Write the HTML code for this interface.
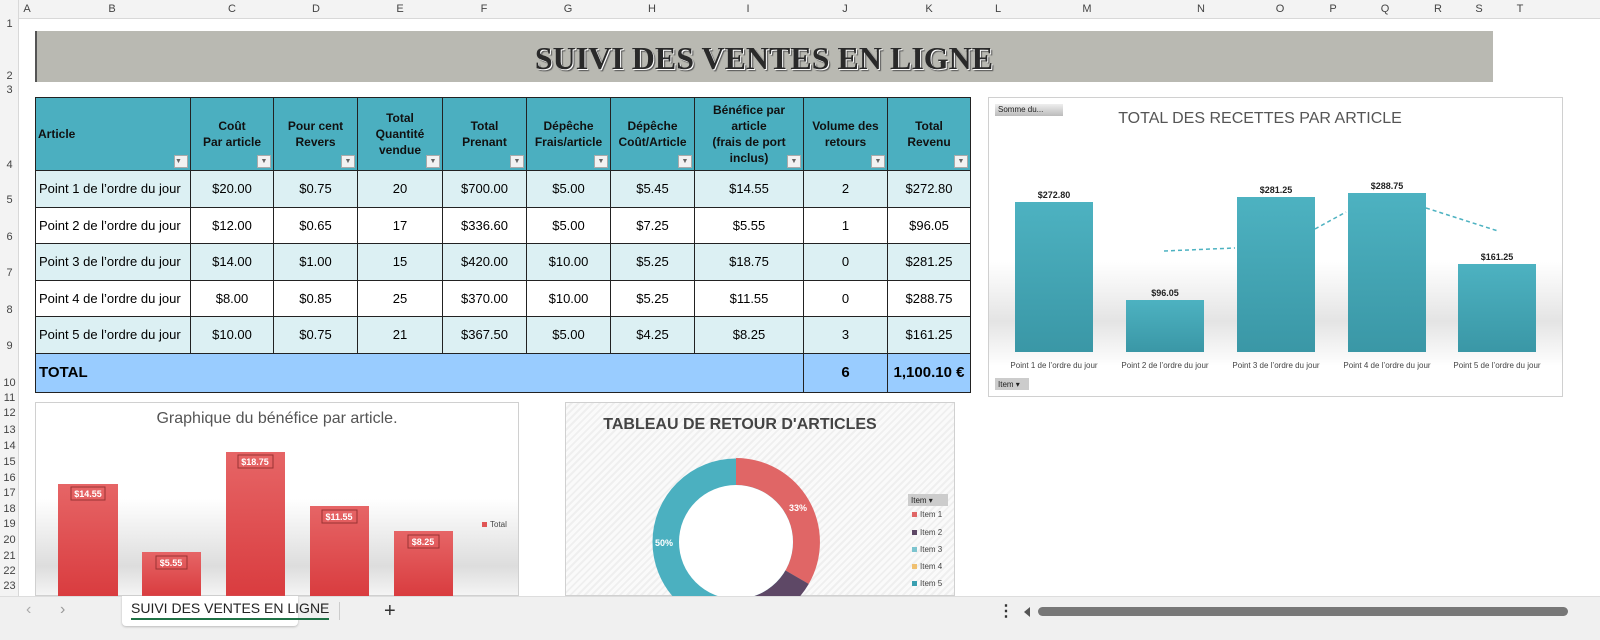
<!DOCTYPE html>
<html><head><meta charset="utf-8"><style>
*{margin:0;padding:0;box-sizing:border-box}
body{width:1600px;height:640px;overflow:hidden;background:#fff;font-family:"Liberation Sans",sans-serif;position:relative}
.a{position:absolute}
.ch{position:absolute;top:0;height:19px;font-size:11px;color:#444;line-height:19px;text-align:center;transform:translateX(-50%)}
.rn{position:absolute;left:0;width:19px;font-size:11px;color:#444;text-align:center}
table{border-collapse:collapse;position:absolute;left:35px;top:97px;table-layout:fixed;font-size:13px}
td{border:1px solid #222;text-align:center;position:relative}
thead td{background:#4bafc0;font-weight:bold;font-size:12px;color:#111;height:73px;line-height:16px;vertical-align:middle}
.dd{position:absolute;right:2px;bottom:2px;width:14px;height:13px;background:#f2f2f2;border:1px solid #aaa;font-size:7px;line-height:12px;color:#666}
tbody tr{height:36.5px}
tr.l td{background:#dcf0f3}
tr.t td{background:#99ccff;font-weight:bold;font-size:15px;height:39px}
</style></head><body>
<div class="a" style="left:0;top:0;width:1600px;height:19px;background:#f3f3f3;border-bottom:1px solid #d8d8d8"></div>
<div class="a" style="left:0;top:0;width:19px;height:596px;background:#f3f3f3;border-right:1px solid #d8d8d8"></div>
<div class="ch" style="left:27px">A</div><div class="ch" style="left:112px">B</div><div class="ch" style="left:232px">C</div><div class="ch" style="left:316px">D</div><div class="ch" style="left:400px">E</div><div class="ch" style="left:484px">F</div><div class="ch" style="left:568px">G</div><div class="ch" style="left:652px">H</div><div class="ch" style="left:748px">I</div><div class="ch" style="left:845px">J</div><div class="ch" style="left:929px">K</div><div class="ch" style="left:998px">L</div><div class="ch" style="left:1087px">M</div><div class="ch" style="left:1201px">N</div><div class="ch" style="left:1280px">O</div><div class="ch" style="left:1333px">P</div><div class="ch" style="left:1385px">Q</div><div class="ch" style="left:1438px">R</div><div class="ch" style="left:1479px">S</div><div class="ch" style="left:1520px">T</div>
<div class="rn" style="top:18px">1</div><div class="rn" style="top:70px">2</div><div class="rn" style="top:84px">3</div><div class="rn" style="top:159px">4</div><div class="rn" style="top:194px">5</div><div class="rn" style="top:231px">6</div><div class="rn" style="top:267px">7</div><div class="rn" style="top:304px">8</div><div class="rn" style="top:340px">9</div><div class="rn" style="top:377px">10</div>
<div class="rn" style="top:392px">11</div><div class="rn" style="top:407px">12</div><div class="rn" style="top:424px">13</div><div class="rn" style="top:440px">14</div><div class="rn" style="top:456px">15</div><div class="rn" style="top:472px">16</div><div class="rn" style="top:487px">17</div><div class="rn" style="top:503px">18</div><div class="rn" style="top:518px">19</div><div class="rn" style="top:534px">20</div><div class="rn" style="top:550px">21</div><div class="rn" style="top:565px">22</div><div class="rn" style="top:580px">23</div>

<div class="a" style="left:35px;top:31px;width:1458px;height:51px;background:#b9b9b2;border-left:2px solid #555"></div>
<div class="a" style="left:35px;top:31px;width:1458px;height:51px;text-align:center;font-family:'Liberation Serif',serif;font-weight:bold;font-size:32px;line-height:54px;color:#2a2a2a;text-shadow:1px 1px 0 #fff,2px 2px 1px #555">SUIVI DES VENTES EN LIGNE</div>

<table>
<colgroup><col style="width:155px"><col style="width:83px"><col style="width:84px"><col style="width:85px"><col style="width:84px"><col style="width:84px"><col style="width:84px"><col style="width:109px"><col style="width:84px"><col style="width:83px"></colgroup>
<thead><tr><td style="text-align:left;padding-left:2px">Article<span class="dd">▼</span></td><td>Coût<br>Par article<span class="dd">▼</span></td><td>Pour cent<br>Revers<span class="dd">▼</span></td><td>Total<br>Quantité<br>vendue<span class="dd">▼</span></td><td>Total<br>Prenant<span class="dd">▼</span></td><td>Dépêche<br>Frais/article<span class="dd">▼</span></td><td>Dépêche<br>Coût/Article<span class="dd">▼</span></td><td>Bénéfice par<br>article<br>(frais de port<br>inclus)<span class="dd">▼</span></td><td>Volume des<br>retours<span class="dd">▼</span></td><td>Total<br>Revenu<span class="dd">▼</span></td></tr></thead>
<tbody>
<tr class="l"><td style="text-align:left;padding-left:3px">Point 1 de l’ordre du jour</td><td>$20.00</td><td>$0.75</td><td>20</td><td>$700.00</td><td>$5.00</td><td>$5.45</td><td>$14.55</td><td>2</td><td>$272.80</td></tr>
<tr><td style="text-align:left;padding-left:3px">Point 2 de l’ordre du jour</td><td>$12.00</td><td>$0.65</td><td>17</td><td>$336.60</td><td>$5.00</td><td>$7.25</td><td>$5.55</td><td>1</td><td>$96.05</td></tr>
<tr class="l"><td style="text-align:left;padding-left:3px">Point 3 de l’ordre du jour</td><td>$14.00</td><td>$1.00</td><td>15</td><td>$420.00</td><td>$10.00</td><td>$5.25</td><td>$18.75</td><td>0</td><td>$281.25</td></tr>
<tr><td style="text-align:left;padding-left:3px">Point 4 de l’ordre du jour</td><td>$8.00</td><td>$0.85</td><td>25</td><td>$370.00</td><td>$10.00</td><td>$5.25</td><td>$11.55</td><td>0</td><td>$288.75</td></tr>
<tr class="l"><td style="text-align:left;padding-left:3px">Point 5 de l’ordre du jour</td><td>$10.00</td><td>$0.75</td><td>21</td><td>$367.50</td><td>$5.00</td><td>$4.25</td><td>$8.25</td><td>3</td><td>$161.25</td></tr>
<tr class="t"><td colspan="8" style="text-align:left;padding-left:3px">TOTAL</td><td>6</td><td>1,100.10 €</td></tr>
</tbody></table>

<div class="a" style="left:988px;top:97px;width:575px;height:300px;border:1px solid #d0d0d0;background:linear-gradient(#fff 0%,#fff 55%,#e4e4e4 75%,#fff 90%)"></div>
<div class="a" style="left:995px;top:104px;width:68px;height:12px;background:linear-gradient(#eee,#bbb);font-size:8px;line-height:12px;padding-left:3px;color:#222">Somme du...</div>
<div class="a" style="left:1060px;top:110px;width:400px;text-align:center;font-size:16px;color:#555">TOTAL DES RECETTES PAR ARTICLE</div>
<svg class="a" style="left:988px;top:97px" width="575" height="300">
<defs><linearGradient id="tg" x1="0" y1="0" x2="0" y2="1"><stop offset="0" stop-color="#4db2c1"/><stop offset="1" stop-color="#3a97a6"/></linearGradient>
<linearGradient id="rg" x1="0" y1="0" x2="0" y2="1"><stop offset="0" stop-color="#e66566"/><stop offset="1" stop-color="#d93c3f"/></linearGradient></defs>
<rect x="27" y="105" width="78" height="150" fill="url(#tg)"/><rect x="138" y="203" width="78" height="52" fill="url(#tg)"/><rect x="249" y="100" width="78" height="155" fill="url(#tg)"/><rect x="360" y="96" width="78" height="159" fill="url(#tg)"/><rect x="470" y="167" width="78" height="88" fill="url(#tg)"/>
<path d="M176 154 L247 151 M327 132 L358 115 M438 111 L510 134" stroke="#4db2c1" stroke-width="1.5" stroke-dasharray="4 3" fill="none"/>
<g font-size="9" font-weight="bold" text-anchor="middle" fill="#222"><text x="66" y="101">$272.80</text><text x="177" y="199">$96.05</text><text x="288" y="96">$281.25</text><text x="399" y="92">$288.75</text><text x="509" y="163">$161.25</text></g>
<g font-size="8" text-anchor="middle" fill="#444"><text x="66" y="271">Point 1 de l’ordre du jour</text><text x="177" y="271">Point 2 de l’ordre du jour</text><text x="288" y="271">Point 3 de l’ordre du jour</text><text x="399" y="271">Point 4 de l’ordre du jour</text><text x="509" y="271">Point 5 de l’ordre du jour</text></g>
<rect x="7" y="281" width="34" height="12" fill="#ccc"/><text x="10" y="290" font-size="8" fill="#222">Item ▾</text>
</svg>

<div class="a" style="left:35px;top:402px;width:484px;height:194px;border:1px solid #d0d0d0;background:linear-gradient(#fff 0%,#fff 50%,#ddd 85%,#f4f4f4 100%)"></div>
<div class="a" style="left:35px;top:410px;width:484px;text-align:center;font-size:16px;color:#555">Graphique du bénéfice par article.</div>
<svg class="a" style="left:35px;top:402px" width="484" height="194">
<rect x="23" y="82" width="60" height="112" fill="url(#rg)"/><rect x="107" y="150" width="59" height="44" fill="url(#rg)"/><rect x="191" y="50" width="59" height="144" fill="url(#rg)"/><rect x="275" y="104" width="59" height="90" fill="url(#rg)"/><rect x="359" y="129" width="59" height="65" fill="url(#rg)"/>
<g font-size="9" font-weight="bold" fill="#fff" text-anchor="middle"><rect x="36" y="85" width="34" height="13" fill="none" stroke="#933"/><text x="53" y="95">$14.55</text><rect x="121" y="154" width="31" height="13" fill="none" stroke="#933"/><text x="136" y="164">$5.55</text><rect x="203" y="53" width="35" height="13" fill="none" stroke="#933"/><text x="220" y="63">$18.75</text><rect x="287" y="108" width="35" height="13" fill="none" stroke="#933"/><text x="304" y="118">$11.55</text><rect x="373" y="133" width="31" height="13" fill="none" stroke="#933"/><text x="388" y="143">$8.25</text></g>
<rect x="447" y="120" width="5" height="5" fill="#e05555"/><text x="455" y="125" font-size="8" fill="#444">Total</text>
</svg>

<div class="a" style="left:565px;top:402px;width:390px;height:194px;border:1px solid #d0d0d0;background:repeating-linear-gradient(135deg,#fafafa 0 3px,#efefef 3px 5px)"></div>
<div class="a" style="left:565px;top:416px;width:350px;text-align:center;font-size:16px;font-weight:bold;color:#444">TABLEAU DE RETOUR D'ARTICLES</div>
<svg class="a" style="left:565px;top:402px" width="390" height="194">
<circle cx="171" cy="140" r="70" fill="none" stroke="#4bb0c0" stroke-width="27"/>
<path d="M171 56 A84 84 0 0 1 243.7 182 L220.4 168.5 A57 57 0 0 0 171 83 Z" fill="#e06666"/>
<path d="M243.7 182 A84 84 0 0 1 171 224 L171 197 A57 57 0 0 0 220.4 168.5 Z" fill="#5e4866"/>
<circle cx="171" cy="140" r="57" fill="#fff"/>
<text x="224" y="109" font-size="9" font-weight="bold" fill="#fff">33%</text><text x="90" y="144" font-size="9" font-weight="bold" fill="#fff">50%</text>
<rect x="343" y="92" width="40" height="12" fill="#ccc"/><text x="346" y="101" font-size="8" fill="#222">Item ▾</text>
<g font-size="8" fill="#444"><rect x="347" y="110" width="5" height="5" fill="#e06666"/><text x="355" y="115">Item 1</text><rect x="347" y="128" width="5" height="5" fill="#5e4866"/><text x="355" y="133">Item 2</text><rect x="347" y="145" width="5" height="5" fill="#7cc4cf"/><text x="355" y="150">Item 3</text><rect x="347" y="162" width="5" height="5" fill="#f0c070"/><text x="355" y="167">Item 4</text><rect x="347" y="179" width="5" height="5" fill="#3a9fb0"/><text x="355" y="184">Item 5</text></g>
</svg>

<div class="a" style="left:0;top:596px;width:1600px;height:44px;background:#f0f0f0;border-top:1px solid #ddd"></div>
<div class="a" style="left:26px;top:601px;font-size:16px;color:#aaa">‹</div><div class="a" style="left:60px;top:601px;font-size:16px;color:#999">›</div>
<div class="a" style="left:122px;top:596px;width:176px;height:30px;background:#fff;border-radius:0 0 4px 4px;box-shadow:0 1px 2px #bbb"></div>
<div class="a" style="left:131px;top:600px;font-size:14px;color:#222;border-bottom:2px solid #1e7145;padding-bottom:2px">SUIVI DES VENTES EN LIGNE</div>
<div class="a" style="left:339px;top:602px;width:1px;height:18px;background:#ccc"></div>
<div class="a" style="left:384px;top:600px;font-size:20px;color:#333">+</div>
<div class="a" style="left:998px;top:601px;font-size:16px;color:#333;font-weight:bold">⋮</div>
<div class="a" style="left:1024px;top:607px;width:0;height:0;border-right:6px solid #555;border-top:5px solid transparent;border-bottom:5px solid transparent"></div>
<div class="a" style="left:1038px;top:607px;width:530px;height:9px;background:#777;border-radius:5px"></div>
</body></html>
